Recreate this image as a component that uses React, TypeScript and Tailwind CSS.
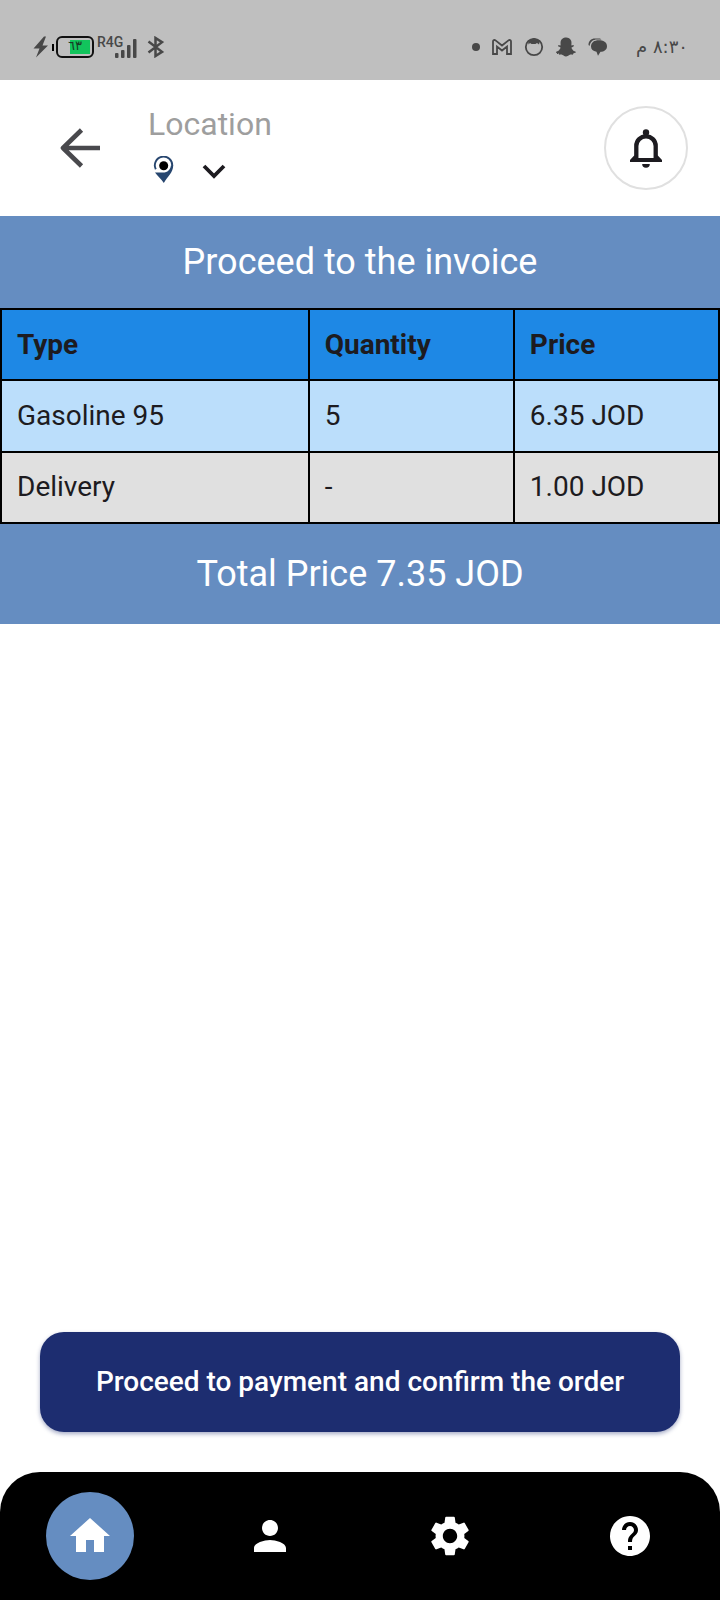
import type { ReactNode } from "react";
import { MdHelp, MdHome, MdPerson, MdSettings } from "react-icons/md";
import { FaSnapchatGhost } from "react-icons/fa";

const rows = [
  { type: "Gasoline 95", quantity: "5", price: "6.35 JOD", tone: "bg-[#bbdefb]" },
  { type: "Delivery", quantity: "-", price: "1.00 JOD", tone: "bg-[#e0e0e0]" },
];

const cell = "border-2 border-black px-[15px] text-left align-middle text-[28px] leading-9 text-[#1d1b20]";

function StatusBar() {
  return (
    <div className="flex h-20 items-end justify-between bg-[#bfbfbf] px-8 pb-5 text-[#484848]">
      <div className="flex h-[26px] items-center">
        <svg width="17" height="22" viewBox="0 0 17 22" fill="currentColor" aria-hidden="true">
          <path d="M12 .5 1.500 12.500h6L4 21.500 16 9.500h-5.500L14 .5z" />
        </svg>
        <div className="ml-[3px] h-[7px] w-[2px] bg-black" />
        <div className="ml-[2px] flex h-[22px] w-[38px] justify-end rounded-[6px] border-2 border-[#111] p-[2px]">
          <div className="relative h-full w-5 bg-[#12c45c]">
            <span className="absolute -top-1 right-2 font-['DejaVu_Sans',sans-serif] text-[13px] leading-5 text-[#173a26]">٦٣</span>
          </div>
        </div>
        <span className="ml-[3px] self-start font-['Roboto',sans-serif] text-[14px] leading-4 font-medium">R4G</span>
        <svg className="-ml-2 self-end" width="22" height="22" viewBox="0 0 22 22" fill="currentColor" aria-hidden="true">
          <rect x="0" y="15" width="3.500" height="5" rx="1" />
          <rect x="6" y="12" width="3.500" height="8" rx="1" />
          <rect x="12" y="7" width="3.500" height="13" rx="1" />
          <rect x="18" y="1" width="3.500" height="19" rx="1" />
        </svg>
        <svg className="ml-2.5" width="18" height="22" viewBox="0 0 18 22" fill="none" stroke="currentColor" strokeWidth="2.500" aria-hidden="true">
          <path d="M1.500 5.500 15 15.800 8.500 20V2L15 6.200 1.500 16.500" />
        </svg>
      </div>
      <div className="flex h-[26px] items-center">
        <div className="size-2 rounded-full bg-current" />
        <svg className="ml-3" width="20" height="16" viewBox="0 0 20 16" fill="none" stroke="currentColor" strokeWidth="1.800" aria-hidden="true">
          <path d="M1 15V2.500C1 1 2.500.6 3.500 1.400L10 6.500l6.500-5.100C17.500.6 19 1 19 2.500V15h-4V7.500l-5 4-5-4V15z" />
        </svg>
        <svg className="ml-3" width="20" height="20" viewBox="0 0 20 20" aria-hidden="true">
          <circle cx="10" cy="10" r="8.200" fill="none" stroke="currentColor" strokeWidth="1.800" />
          <path d="M4 3.500 10 1l6 2.500-1 4-2-1.500-1.500 1h-4L6 6 4.500 7.500z" fill="currentColor" />
        </svg>
        <FaSnapchatGhost className="ml-3" size={20} aria-hidden="true" />
        <svg className="ml-3" width="20" height="18" viewBox="0 0 20 18" fill="currentColor" aria-hidden="true">
          <path d="M.5 7C.5 3 3 .5 7 .5h5l1.500 1H9C5 1.500 2.500 3.500 1.500 8z" />
          <path d="M10.500 2.200c5 0 8.500 1.800 8.500 6 0 3.800-3 5.300-6.500 5.600l-2.500 4-1.500-4C5 13 3 11.500 3 8.500c0-4.300 3.500-6.300 7.500-6.300z" />
        </svg>
        <span dir="rtl" className="ml-7 font-['DejaVu_Sans',sans-serif] text-[18px] leading-6">٨:٣٠ م</span>
      </div>
    </div>
  );
}

function Banner({ children, className }: { children: ReactNode; className: string }) {
  return (
    <div className={`flex items-center justify-center bg-[#658dc1] text-center text-4xl text-white ${className}`}>
      {children}
    </div>
  );
}

function NavItem({ label, active, children }: { label: string; active?: boolean; children: ReactNode }) {
  return (
    <a
      href="#"
      aria-label={label}
      aria-current={active ? "page" : undefined}
      className="flex flex-1 justify-center text-white"
    >
      <span className={`flex size-[88px] items-center justify-center rounded-full ${active ? "bg-[#658dc1]" : ""}`}>
        {children}
      </span>
    </a>
  );
}

export default function App() {
  return (
    <div className="flex min-h-screen flex-col bg-white font-['Roboto',sans-serif]">
      <StatusBar />
      <header className="flex h-[136px] items-center pr-8 pl-[60px]">
        <button type="button" aria-label="Back" className="text-[#49494d]">
          <svg className="block" width="40" height="40" viewBox="0 0 40 40" fill="none" stroke="currentColor" strokeWidth="4.600" aria-hidden="true">
            <path d="M21.500 2 3 20l18.500 18M3 20h37" strokeLinejoin="round" />
          </svg>
        </button>
        <div className="ml-12 flex flex-1 flex-col items-start">
          <span className="text-[32px] leading-9 text-[#9e9e9e]">Location</span>
          <button type="button" aria-label="Choose location" className="mt-2 flex h-10 items-center gap-7 pl-1">
            <svg width="22" height="28" viewBox="-1.500 0 22 28" aria-hidden="true">
              <path d="M2.300 13.300A8.700 8.700 0 1 1 18.700 10" fill="none" stroke="#27466f" strokeWidth="1.900" />
              <path d="M1.500 16.500h7C13.500 17 17 14 17.400 9.500h2.300C19.700 16.500 14 20.500 10.300 27 7.500 22.500 4 20 1.500 16.500z" fill="#27466f" />
              <circle cx="10.200" cy="9.800" r="4.500" fill="#000" />
            </svg>
            <svg width="24" height="18" viewBox="0 0 24 18" fill="none" stroke="#1d1b20" strokeWidth="3.800" aria-hidden="true">
              <path d="m2 5 10 10L22 5" />
            </svg>
          </button>
        </div>
        <button type="button" aria-label="Notifications" className="flex size-[84px] items-center justify-center rounded-full border-2 border-[#e0e0e0] text-[#1d1b20]">
          <svg width="32" height="40" viewBox="0 0 32 40" fill="currentColor" aria-hidden="true">
            <circle cx="16" cy="4.500" r="3.200" />
            <path d="M6.300 31V18a9.700 9.700 0 0 1 19.400 0v13" fill="none" stroke="currentColor" strokeWidth="4.300" />
            <path d="M0 34v-2l4.200-4.500H8V30h16v-2.500h3.800L32 32v2z" />
            <path d="M12.200 36h7.600a3.800 3.800 0 0 1-7.600 0z" />
          </svg>
        </button>
      </header>
      <main className="flex flex-1 flex-col">
        <Banner className="h-[92px]">
          <h1>Proceed to the invoice</h1>
        </Banner>
        <table className="h-[216px] w-full table-fixed border-collapse">
          <thead>
            <tr className="h-[71px] bg-[#1e88e5]">
              <th scope="col" className={`${cell} w-3/7 font-bold`}>Type</th>
              <th scope="col" className={`${cell} w-2/7 font-bold`}>Quantity</th>
              <th scope="col" className={`${cell} w-2/7 font-bold`}>Price</th>
            </tr>
          </thead>
          <tbody>
            {rows.map((row) => (
              <tr key={row.type} className={`h-[71px] ${row.tone}`}>
                <td className={cell}>{row.type}</td>
                <td className={cell}>{row.quantity}</td>
                <td className={cell}>{row.price}</td>
              </tr>
            ))}
          </tbody>
        </table>
        <Banner className="h-[100px]">
          <p>Total Price 7.35 JOD</p>
        </Banner>
        <button
          type="button"
          className="mx-10 mt-auto mb-10 h-[100px] rounded-3xl bg-[#1d2d70] text-[28px] leading-9 font-medium text-white shadow-[0_2px_4px_rgba(29,45,112,0.4)]"
        >
          Proceed to payment and confirm the order
        </button>
      </main>
      <nav aria-label="Main" className="flex h-32 items-center rounded-t-[40px] bg-black">
        <NavItem label="Home" active>
          <MdHome size={48} />
        </NavItem>
        <NavItem label="Profile">
          <MdPerson size={48} />
        </NavItem>
        <NavItem label="Settings">
          <MdSettings size={48} />
        </NavItem>
        <NavItem label="Help">
          <MdHelp size={48} />
        </NavItem>
      </nav>
    </div>
  );
}
